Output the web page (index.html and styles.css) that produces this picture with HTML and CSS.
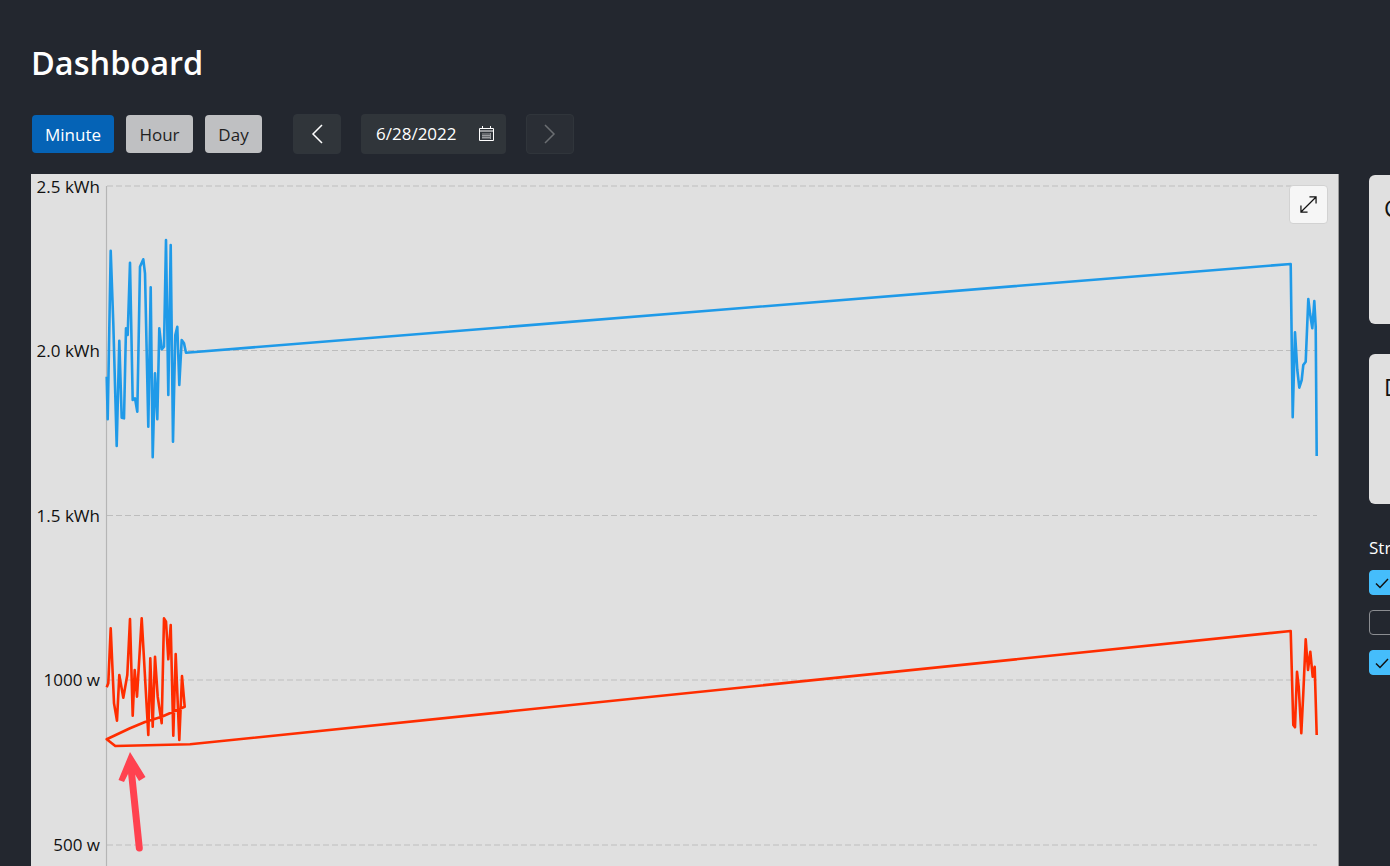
FILE: index.html
```html
<!DOCTYPE html>
<html lang="en">
<head>
<meta charset="utf-8">
<title>Dashboard</title>
<link rel="stylesheet" href="styles.css">
</head>
<body>
<div class="page">
  <h1 class="title">Dashboard</h1>
  <div class="toolbar">
    <div class="ranges">
      <button class="range minute active">Minute</button>
      <button class="range hour">Hour</button>
      <button class="range day">Day</button>
    </div>
    <div class="dates">
      <button class="nav"><svg class="chev" viewBox="0 0 12 20"><path d="M11 1 2 10l9 9"/></svg></button>
      <div class="date"><span>6/28/2022</span>
        <svg class="cal" viewBox="0 0 15 15"><path class="cal-b" d="M3 5.500h9v8H3z"/><path class="cal-g" d="M4 7v6M6 7v6M8 7v6M10 7v6M11.500 7v6M3 9.500h9M3 11.500h9"/><path class="cal-o" d="M.5 2.500h14v12H.5zM.5 5h14M3.500 0v3M11.500 0v3"/></svg>
      </div>
      <button class="nav off"><svg class="chev" viewBox="0 0 12 20"><path d="M1 1l9 9-9 9"/></svg></button>
    </div>
  </div>
  <div class="main">
    <div class="chart">
      <svg class="plot" viewBox="31 174 1308 692">
        <g class="grid">
          <path d="M107 186H1317M107 350.5H1317M107 515.5H1317M107 680H1317M107 845H1317"/>
        </g>
        <path class="axis" d="M106.5 186V866"/>
        <g class="labels">
          <text x="100" y="193">2.5 kWh</text>
          <text x="100" y="357">2.0 kWh</text>
          <text x="100" y="522">1.5 kWh</text>
          <text x="100" y="686">1000 w</text>
          <text x="100" y="851">500 w</text>
        </g>
        <polyline class="blue" points="106.7,376.7 107.7,419.3 110.7,250.7 113.3,323.3 116.7,446 119.3,340.7 121.7,417.7 124,418.3 126,328.3 127.7,335 130,262.7 132.7,400 135,398.3 137.3,411.7 140,266.7 143.3,259.3 145,273.3 148.3,426.7 150.7,287.3 152.7,457.3 155,373.3 157.3,419.3 159.3,328.3 161.7,349.3 164,346.7 166,240 168.3,395 170.7,245 173,441.7 175.3,335 177.3,326.7 179.3,385 181.7,340 184,343.3 186,352.7 1290.7,264 1292.7,417.3 1295,332.3 1297.3,370 1299.3,387.7 1301.7,380 1303.3,365 1305.7,361.7 1308.3,299 1310,313.3 1312.3,328.3 1314.3,301 1315.7,326.7 1316.7,456"/>
        <polyline class="red" points="106.7,687.3 108.3,683.3 110.7,628.3 114,703.3 117,720.7 119.3,675 123.3,697.7 127.3,675 130,619 132.7,715.7 134.7,670 137,696.7 141.7,618.3 148.3,735 150.3,658.3 152.7,726.7 155,656.7 157.7,696.7 161.7,723.3 164,618.3 166,621.7 168.3,659.3 170.7,625 173.3,735.7 175.7,654 179.3,740 182,676 184.7,706.7 161.7,716.7 145,722 130,728.3 106.7,739.3 115.3,746 190,744.3 1290.7,631 1293.3,725 1295,727.3 1297,671.7 1298.7,686.7 1301.3,733.3 1303.3,693.3 1305.7,639.3 1308,670 1310.3,651.7 1312.7,676.7 1314.7,666.7 1316.7,735"/>
        <path class="arrow-shaft" d="M139.3 848 131 768"/>
        <path class="arrow-head" d="M130 752 145.500 777 139 781 131 768 124 782 118.500 780Z"/>
      </svg>
      <button class="expand"><svg viewBox="0 0 18 18"><path d="M1 17 17 1M10 1H17V8M1 10V17H8"/></svg></button>
    </div>
    <aside class="side">
      <div class="card"><span class="card-title">Current</span></div>
      <div class="card"><span class="card-title">Daily</span></div>
      <div class="strings">
        <div class="strings-title">Strings</div>
        <label class="check"><span class="box on"><svg viewBox="0 0 14 14"><path d="M1 7.500 5 11.500 13 3"/></svg></span>String 1</label>
        <label class="check"><span class="box"></span>String 2</label>
        <label class="check"><span class="box on"><svg viewBox="0 0 14 14"><path d="M1 7.500 5 11.500 13 3"/></svg></span>String 3</label>
      </div>
    </aside>
  </div>
</div>
</body>
</html>
```
FILE: styles.css
```css
* { box-sizing: border-box; }
html, body { margin: 0; height: 100%; overflow: hidden; }
body { background: #23272f; color: #fff; font-family: "Open Sans", "Noto Sans", sans-serif; }
.page { width: 1690px; padding: 0 0 0 31px; display: flex; flex-direction: column; height: 866px; }
.title { margin: 40px 0 0; font-size: 32.500px; font-weight: 600; line-height: 46px; height: 46px; }
.toolbar { display: flex; align-items: center; margin: 28px 0 0 1px; height: 40px; }
.ranges { display: flex; gap: 12px; }
.range { height: 38px; padding: 0; border: 0; border-radius: 4px; background: #bfc0c2; color: #1f1f1f; font: 400 17px "Open Sans", sans-serif; }
.minute { width: 82px; }
.hour { width: 67px; }
.day { width: 57px; }
.range.active { background: #0563b6; color: #fff; }
.dates { display: flex; gap: 20px; margin-left: 31px; }
.nav { width: 48px; height: 40px; border: 1px solid #30353b; border-radius: 4px; background: #30353a; display: flex; align-items: center; justify-content: center; padding: 0; }
.nav.off { background: #2a2e35; }
.chev { width: 12px; height: 20px; fill: none; stroke: #fff; stroke-width: 1.500; }
.off .chev { stroke: #6b6e72; }
.date { width: 145px; height: 40px; background: #30353a; border-radius: 4px; display: flex; align-items: center; justify-content: space-between; padding: 0 12px 1px 15px; font-size: 17px; }
.cal { width: 15px; height: 15px; }
.cal-o { fill: none; stroke: #fff; stroke-width: 1; }
.cal-b { fill: #30353a; }
.cal-g { fill: none; stroke: #9a9c9f; stroke-width: 1; }
.main { display: flex; margin-top: 20px; gap: 30px; flex: 1; min-height: 0; }
.chart { position: relative; flex: none; width: 1308px; height: 692px; background: #e0e0e0; border-right: 1px solid #9a9a9a; }
.plot { display: block; width: 1308px; height: 692px; }
.grid path { fill: none; stroke: #bdbdbd; stroke-width: 1.200; stroke-dasharray: 6 3; }
.axis { stroke: #b5b5b5; stroke-width: 1.200; }
.labels text { font-family: "Open Sans", sans-serif; font-size: 17px; text-anchor: end; fill: #111; }
.blue, .red { fill: none; stroke-width: 2.600; stroke-linejoin: round; }
.blue { stroke: #1f9ae8; }
.red { stroke: #ff2d00; }
.arrow-shaft { stroke: #ff4250; stroke-width: 7; stroke-linecap: round; fill: none; }
.arrow-head { fill: #ff4250; }
.expand { position: absolute; top: 11px; right: 10px; width: 39px; height: 39px; padding: 10px; background: #f6f6f6; border: 1px solid #d2d2d2; border-radius: 4px; }
.expand svg { display: block; width: 17px; height: 17px; fill: none; stroke: #111; stroke-width: 1.300; }
.side { width: 321px; flex: none; display: flex; flex-direction: column; padding-top: 1px; }
.card { height: 149px; background: #e0e0e0; border-radius: 6px; padding: 17px 15px; color: #111; font-size: 23px; margin-bottom: 30px; }
.card + .card { height: 150px; margin-bottom: 0; }
.strings { margin-top: 33px; font-size: 17px; }
.strings-title { line-height: 22px; margin-bottom: 11px; }
.check { display: flex; align-items: center; gap: 8px; height: 25px; margin-bottom: 15px; }
.box { width: 25px; height: 25px; border-radius: 4px; border: 1px solid #8b8d91; display: flex; align-items: center; justify-content: center; }
.box.on { background: #45bdfb; border-color: #45bdfb; }
.box svg { width: 14px; height: 14px; fill: none; stroke: #111; stroke-width: 1.500; }
```
